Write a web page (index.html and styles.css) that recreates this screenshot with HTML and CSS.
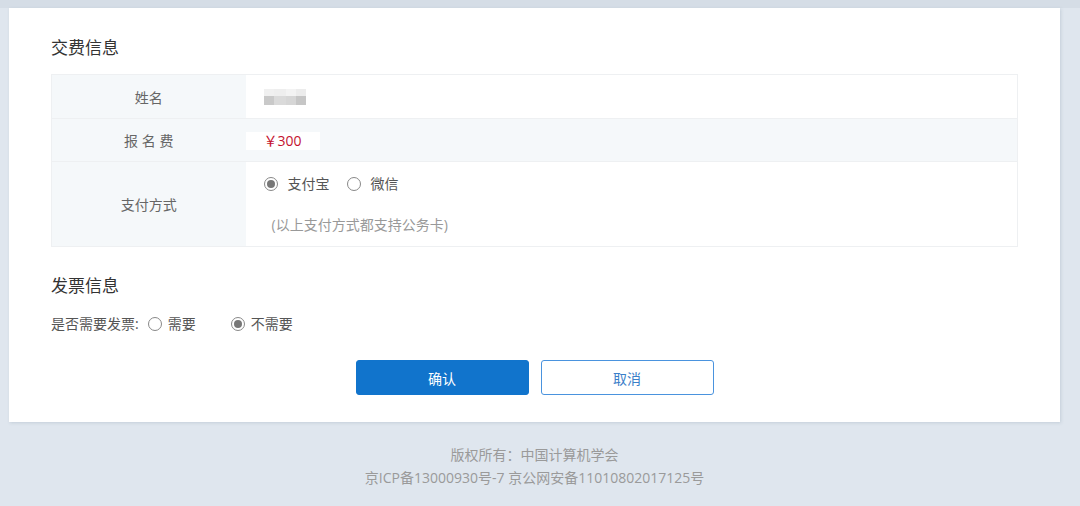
FILE: index.html
```html
<!DOCTYPE html>
<html lang="zh-CN">
<head>
    <meta charset="UTF-8">
    <meta name="viewport" content="width=device-width, initial-scale=1.0">
    <title>交费信息</title>
    <link rel="stylesheet" href="styles.css">
</head>
<body>
    <div id="wrap">
        <div class="card">
            <h3 class="title">交费信息</h3>
            <table class="info">
                <tr class="row-name">
                    <th>姓名</th>
                    <td class="val">
                        <div class="masked">
                            <span></span><span></span><span></span><span></span>
                            <span></span><span></span><span></span><span></span>
                        </div>
                    </td>
                </tr>
                <tr class="row-fee">
                    <th>报 名 费</th>
                    <td class="val-fee"><span class="fee">￥300</span></td>
                </tr>
                <tr class="row-pay">
                    <th>支付方式</th>
                    <td class="val">
                        <div class="pay-opts">
                            <label class="radio"><input type="radio" name="pay" checked><span>支付宝</span></label>
                            <label class="radio"><input type="radio" name="pay"><span>微信</span></label>
                        </div>
                        <p class="tip">(以上支付方式都支持公务卡)</p>
                    </td>
                </tr>
            </table>

            <h3 class="title invoice-title">发票信息</h3>
            <div class="invoice">
                <span class="ask">是否需要发票:</span>
                <label class="radio"><input type="radio" name="inv"><span>需要</span></label>
                <label class="radio"><input type="radio" name="inv" checked><span>不需要</span></label>
            </div>

            <div class="btns">
                <button class="btn btn-ok">确认</button>
                <button class="btn btn-cancel">取消</button>
            </div>
        </div>

        <div class="footer">
            <p>版权所有：中国计算机学会</p>
            <p>京ICP备13000930号-7 京公网安备11010802017125号</p>
        </div>
    </div>
</body>
</html>
```

FILE: styles.css
```css
* {
    box-sizing: border-box;
}
body {
    margin: 0;
    font-family: "Open Sans", "Noto Sans CJK SC", "Microsoft YaHei", sans-serif;
    font-size: 14px;
    color: #555;
    background: #dfe6ee;
    background-image: linear-gradient(#d5dde6 0, #d5dde6 8px, #dfe6ee 8px);
    height: 506px;
    overflow: hidden;
}
#wrap {
    width: 1051px;
    margin-left: 9px;
    padding-top: 8px;
}
.card {
    background: #fff;
    padding: 28px 42px 27px;
    box-shadow: 1px 1px 3px rgba(120, 140, 160, 0.25);
}
.title {
    margin: 0 0 14px;
    font-size: 17px;
    line-height: 24px;
    font-weight: normal;
    color: #333;
}

/* 交费信息 */
.info {
    width: 100%;
    border-collapse: collapse;
    border: 1px solid #eef0f2;
}
.info th {
    width: 194px;
    font-weight: normal;
    color: #666;
    background: #f5f8fa;
    text-align: center;
    padding: 0;
}
.info tr {
    border-bottom: 1px solid #eef0f2;
}
.row-name {
    height: 44px;
}
.row-fee {
    height: 43px;
    background: #f5f8fa;
}
.row-pay {
    height: 85px;
}
.val {
    background: #fff;
    padding: 0 0 0 18px;
    vertical-align: middle;
}
.val-fee {
    padding: 0;
}
.fee {
    display: inline-block;
    width: 74px;
    height: 18px;
    line-height: 18px;
    padding-left: 18px;
    background: #fff;
    color: #c4122f;
}
.masked {
    display: grid;
    grid-template-columns: 10px 12px 10px 10px;
    grid-template-rows: 7px 9px;
    width: 42px;
    filter: blur(0.6px);
}
.masked span:nth-child(1) { background: #f0f0f0; }
.masked span:nth-child(2) { background: #eeeeee; }
.masked span:nth-child(3) { background: #f3f3f3; }
.masked span:nth-child(4) { background: #ececec; }
.masked span:nth-child(5) { background: #c9c9c9; }
.masked span:nth-child(6) { background: #dadada; }
.masked span:nth-child(7) { background: #d6d6d6; }
.masked span:nth-child(8) { background: #c6c6c6; }

.pay-opts {
    display: flex;
    gap: 17px;
    line-height: 20px;
}
.tip {
    margin: 21px 0 0 8px;
    line-height: 20px;
    color: #999;
}

/* 单选 */
.radio {
    display: inline-flex;
    align-items: center;
    gap: 10px;
    color: #555;
}
.radio input {
    appearance: none;
    -webkit-appearance: none;
    margin: 0;
    width: 14px;
    height: 14px;
    border: 1px solid #888;
    border-radius: 50%;
    background: #fff;
    position: relative;
}
.radio input:checked::after {
    content: "";
    position: absolute;
    left: 2px;
    top: 2px;
    width: 8px;
    height: 8px;
    border-radius: 50%;
    background: #777;
}

/* 发票信息 */
.invoice-title {
    margin-top: 27px;
    margin-bottom: 16px;
}
.invoice {
    display: flex;
    align-items: center;
    line-height: 20px;
}
.invoice .ask {
    margin-right: 9px;
}
.invoice .radio {
    gap: 6px;
}
.invoice .radio + .radio {
    margin-left: 35px;
}

.btns {
    display: flex;
    justify-content: center;
    gap: 12px;
    margin-top: 26px;
}
.btn {
    width: 173px;
    height: 35px;
    border-radius: 3px;
    font-family: inherit;
    font-size: 14px;
    cursor: pointer;
}
.btn-ok {
    background: #1174cc;
    border: 1px solid #1174cc;
    color: #fff;
}
.btn-cancel {
    background: #fff;
    border: 1px solid #4a93de;
    color: #3b80c9;
}

.footer {
    margin-top: 21px;
    text-align: center;
    color: #9a9a9a;
    font-size: 14px;
    line-height: 23px;
}
.footer p {
    margin: 0;
}
```
